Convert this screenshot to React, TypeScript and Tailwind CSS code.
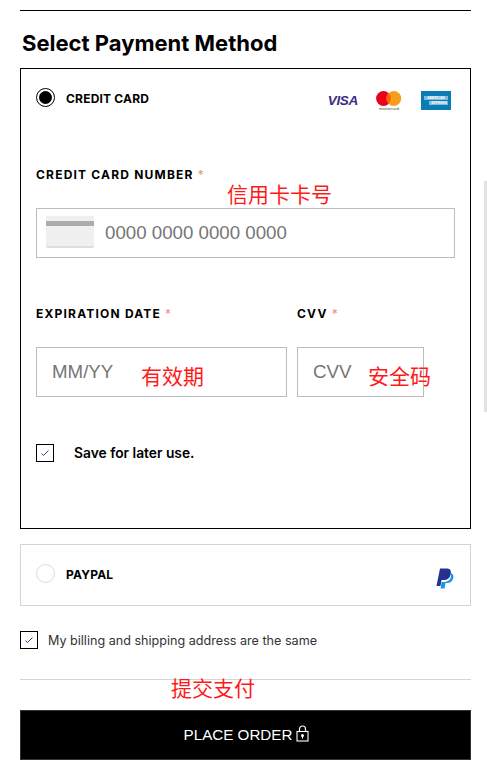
import React from 'react';

const sans = "font-['Inter','Noto_Sans',sans-serif]";
const cjk = "font-['Noto_Sans_CJK_SC',sans-serif]";

function Note({ children, className }: { children: React.ReactNode; className: string }) {
  return <span className={`absolute text-[21px] leading-[26px] text-[#ff1a1a] ${cjk} ${className}`}>{children}</span>;
}

function Radio({ checked }: { checked?: boolean }) {
  return (
    <span className={`flex h-[19px] w-[19px] shrink-0 items-center justify-center rounded-full border ${checked ? 'border-black' : '-mt-[3px] border-[#dcdcdc]'}`}>
      {checked && <span className="h-[13px] w-[13px] rounded-full bg-black" />}
    </span>
  );
}

function Check() {
  return (
    <span className="flex h-[18px] w-[18px] shrink-0 items-center justify-center border border-black">
      <svg width="10" height="8" viewBox="0 0 10 8" fill="none">
        <path d="M1.5 4.5 L3.5 6.5 L8.5 1.5" stroke="#5b2a86" strokeWidth="1" />
      </svg>
    </span>
  );
}

function Label({ text }: { text: string }) {
  return (
    <div className={`text-[12px] leading-[14px] font-bold tracking-[1.2px] text-black ${sans}`}>
      {text} <span className="font-normal text-[#f48a8a]">*</span>
    </div>
  );
}

function Field({ placeholder, className }: { placeholder: string; className: string }) {
  return (
    <input
      readOnly
      placeholder={placeholder}
      className={`h-[50px] border border-[#bdbdbd] bg-white pl-[15px] font-['Liberation_Sans',sans-serif] text-[18.7px] outline-none placeholder:text-[#757575] ${className}`}
    />
  );
}

function Logos() {
  return (
    <div className="mt-[7px] flex items-center">
      <span className="mt-[1px] mr-[18px] font-['Liberation_Sans',sans-serif] text-[13.5px] leading-none font-bold tracking-[-0.3px] text-[#3b2a86] italic">VISA</span>
      <svg width="26" height="20" viewBox="0 0 26 20" className="mr-[19px]">
        <circle cx="7.5" cy="7.5" r="7.4" fill="#eb001b" />
        <circle cx="17.8" cy="7.5" r="7.4" fill="#f79e1b" />
        <path d="M12.65 2.2 a7.4 7.4 0 0 1 0 10.6 a7.4 7.4 0 0 1 0 -10.6" fill="#ff5f00" />
        <text x="13" y="19" textAnchor="middle" fontSize="4" fill="#444" fontFamily="Liberation Sans">mastercard</text>
      </svg>
      <svg width="30" height="19" viewBox="0 0 30 19">
        <rect width="30" height="19" fill="#0b7db5" />
        <rect x="3" y="5" width="24" height="4" fill="#7fbcd9" />
        <rect x="8" y="10" width="19" height="4" fill="#7fbcd9" />
        <text x="15" y="8.3" textAnchor="middle" fontSize="3.2" fontWeight="700" fill="#fff" fontFamily="Liberation Sans">AMERICAN</text>
        <text x="18" y="13.2" textAnchor="middle" fontSize="3.2" fontWeight="700" fill="#fff" fontFamily="Liberation Sans">EXPRESS</text>
      </svg>
    </div>
  );
}

export default function App() {
  return (
    <div className={`relative h-[771px] w-[487px] overflow-hidden bg-white pt-[10px] pr-[16px] pl-[20px] ${sans}`}>
      <div className="h-px bg-black" />
      <h1 className="flex h-[57px] items-center pt-[7px] pl-[2px] text-[22px] font-bold text-black">Select Payment Method</h1>

      <div className="h-[461px] border border-black px-[15px]">
        <div className="flex h-[56px] items-center justify-between pr-[4px]">
          <div className="flex items-center">
            <Radio checked />
            <span className="mt-[4px] ml-[11px] text-[12px] font-bold tracking-[0.2px] text-black">CREDIT CARD</span>
          </div>
          <Logos />
        </div>

        <div className="mt-[43px]">
          <Label text="CREDIT CARD NUMBER" />
        </div>
        <div className="relative mt-[26px]">
          <Field placeholder="0000 0000 0000 0000" className="w-[419px] pl-[68px]" />
          <svg width="48" height="32" viewBox="0 0 48 32" className="absolute top-[8px] left-[10px]">
            <rect width="48" height="32" rx="2" fill="#dedede" />
            <rect width="48" height="30" rx="2" fill="#f0f0f0" />
            <rect y="5" width="48" height="5" fill="#acacac" />
          </svg>
        </div>

        <div className="mt-[49px] flex">
          <div className="w-[261px]"><Label text="EXPIRATION DATE" /></div>
          <Label text="CVV" />
        </div>
        <div className="mt-[26px] flex gap-[10px]">
          <Field placeholder="MM/YY" className="w-[251px]" />
          <Field placeholder="CVV" className="w-[127px]" />
        </div>

        <div className="mt-[46px] flex items-center">
          <Check />
          <span className="ml-[20px] text-[13.8px] font-semibold text-black">Save for later use.</span>
        </div>
      </div>

      <div className="mt-[15px] flex h-[62px] items-center justify-between border border-[#d4d4d4] pr-[16px] pl-[15px]">
        <div className="flex items-center">
          <Radio />
          <span className="ml-[11px] text-[12px] font-bold tracking-[0.2px] text-black">PAYPAL</span>
        </div>
        <svg width="18" height="21" viewBox="0 0 18 21" className="mt-[6px]">
          <path d="M4 0.5 H11 C15 0.5 15.5 4 14.5 7 C13.5 11 10.5 12 7.5 12 H5.5 L4.5 18 H0.5 Z" fill="#26308f" />
          <path d="M15 5 C17.5 6 18 8.5 17 11 C16 14 13.5 15 11 15 H9.5 L8.5 20.5 H4.6 L5.6 14 H8 C11 14 14 12.5 15 9 Z" fill="#139ae8" />
        </svg>
      </div>

      <div className="mt-[25px] flex h-[18px] items-center">
        <Check />
        <span className="mt-[1px] ml-[10px] text-[12.6px] leading-[16px] text-[#333]">My billing and shipping address are the same</span>
      </div>

      <div className="mt-[30px] h-px bg-[#d5d5d5]" />

      <button className="mt-[30px] flex h-[50px] w-full items-center justify-center gap-[4px] border border-[#333] bg-black pl-[2px] font-['Liberation_Sans',sans-serif] text-[15.2px] text-white">
        PLACE ORDER
        <svg width="13" height="17" viewBox="0 0 13 17" fill="none" className="mb-[4px]">
          <path d="M3.5 7 V4 C3.5 2.2 4.8 1 6.5 1 C8.2 1 9.5 2.2 9.5 4 V7" stroke="#fff" strokeWidth="1.2" />
          <rect x="1" y="6.5" width="11" height="9.5" stroke="#fff" strokeWidth="1.1" />
          <circle cx="6.5" cy="10.5" r="1.5" fill="#fff" />
          <rect x="6" y="10.5" width="1" height="3" fill="#fff" />
        </svg>
      </button>

      <Note className="top-[180px] left-[227px]">信用卡卡号</Note>
      <Note className="top-[362px] left-[141px]">有效期</Note>
      <Note className="top-[362px] left-[368px]">安全码</Note>
      <Note className="top-[674px] left-[171px]">提交支付</Note>

      <div className="absolute top-[181px] right-0 h-[231px] w-[3px] bg-[#e2e2e2]" />
    </div>
  );
}
